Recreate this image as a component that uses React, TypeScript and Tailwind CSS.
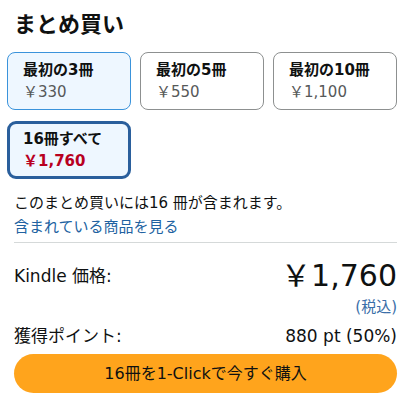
export default function App() {
  const options = [
    { label: "最初の3冊", price: "￥330", selected: true },
    { label: "最初の5冊", price: "￥550", selected: false },
    { label: "最初の10冊", price: "￥1,100", selected: false },
  ]

  return (
    <div
      className="min-h-screen bg-white pl-[14px] pr-[16px] pt-[10px] text-[#0f1111]"
      style={{ fontFamily: '"DejaVu Sans", "Noto Sans CJK JP", sans-serif' }}
    >
      {/* 見出し */}
      <h1 className="text-[22px] font-bold leading-[30px]">まとめ買い</h1>

      {/* 巻数の選択 */}
      <div className="mt-[12px] -ml-[7px] grid grid-cols-3 gap-x-[9px] gap-y-[11px]">
        {options.map((o) => (
          <button
            key={o.label}
            className={`flex h-[58px] flex-col justify-center rounded-[8px] border pl-[15px] text-left ${
              o.selected ? "border-[#3a93db] bg-[#eef7ff]" : "border-[#8d9090] bg-white"
            }`}
          >
            <span className="text-[15px] font-bold leading-[22px]">{o.label}</span>
            <span className="text-[15px] leading-[22px] text-[#565959]">{o.price}</span>
          </button>
        ))}
        <button className="flex h-[58px] flex-col justify-center rounded-[9px] border-[3px] border-[#2a5f9c] bg-[#eef7ff] pl-[13px] text-left">
          <span className="text-[15px] font-bold leading-[22px]">16冊すべて</span>
          <span className="text-[15px] font-bold leading-[22px] text-[#b8001f]">￥1,760</span>
        </button>
      </div>

      <p className="mt-[12px] text-[15px] leading-[24px]">このまとめ買いには16 冊が含まれます。</p>
      <a href="#" className="block text-[15px] leading-[24px] text-[#2162a1]">
        含まれている商品を見る
      </a>

      <div className="mt-[3px] border-t border-[#d5d9d9]" />

      {/* 価格 */}
      <div className="mt-[15px] flex items-center justify-between">
        <span className="text-[17px] leading-[24px]">Kindle 価格:</span>
        <span className="text-[30px] leading-[36px]">￥1,760</span>
      </div>
      <div className="mt-[4px] text-right text-[15px] leading-[18px] text-[#3a6ea8]">(税込)</div>

      <div className="mt-[8px] flex items-center justify-between text-[17px] leading-[24px]">
        <span>獲得ポイント:</span>
        <span>880 pt (50%)</span>
      </div>

      <button className="mt-[6px] flex h-[39px] w-full items-center justify-center rounded-full bg-[#ffa41c] text-[16px]">
        16冊を1-Clickで今すぐ購入
      </button>
    </div>
  )
}
